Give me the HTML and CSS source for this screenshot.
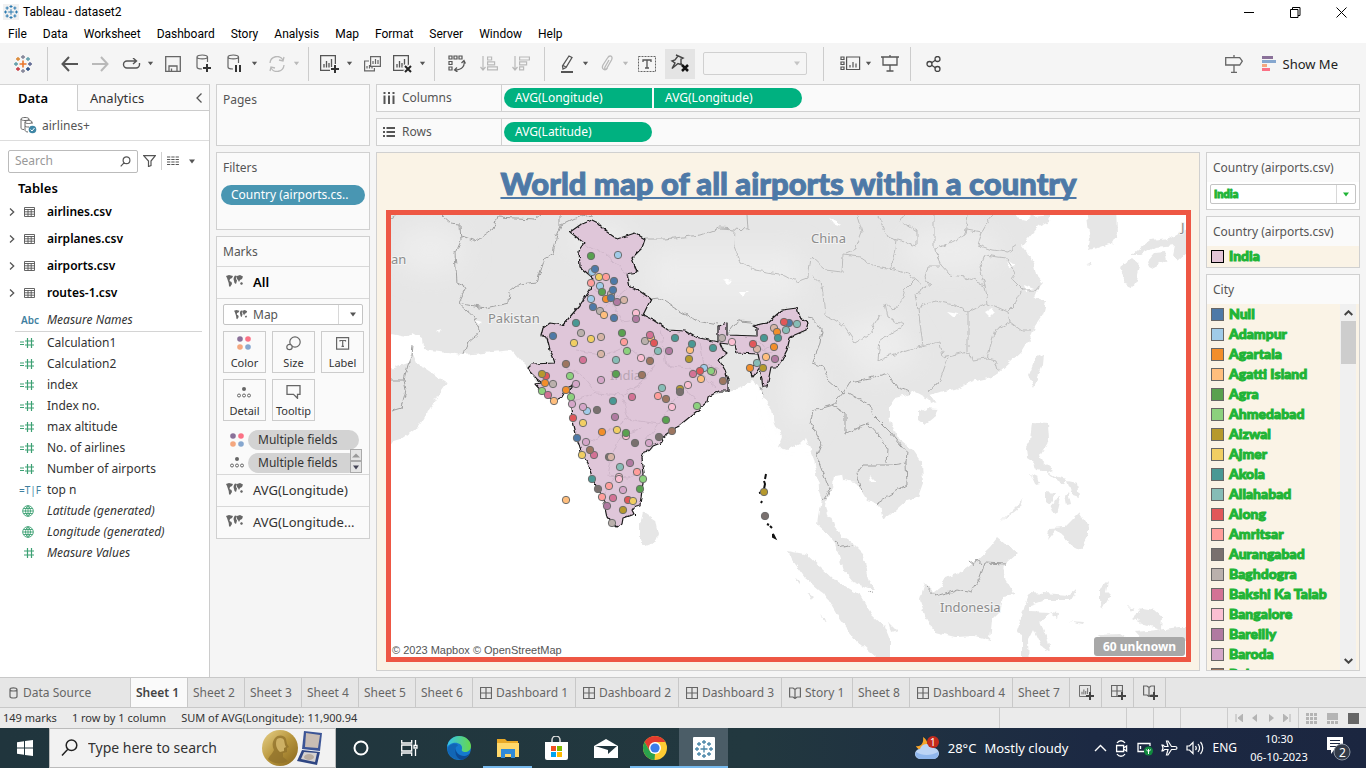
FILE: index.html
```html
<!DOCTYPE html>
<html lang="en">
<head>
<meta charset="utf-8">
<title>Tableau - dataset2</title>
<link rel="stylesheet" href="styles.css">
</head>
<body>
<svg class="defs" aria-hidden="true">
  <symbol id="plusmark" viewBox="0 0 18 18"><path d="M9 5.500v7M5.500 9h7M9 0v4M7 2h4M9 14v4M7 16h4M0 9h4M2 7v4M14 9h4M16 7v4M4 2v4M2 4h4M14 2v4M12 4h4M4 12v4M2 14h4M14 12v4M12 14h4" fill="none" stroke="currentColor" stroke-width="1.300"/></symbol>
  <symbol id="caret" viewBox="0 0 8 5"><path d="M1 .5h6L4 4.500z" fill="currentColor"/></symbol>
  <symbol id="world" viewBox="0 0 18 13"><path d="M0 1l3-1 4 1-1 2-2 1-.5 2 2 1 .5 2-2 3-1-1-.3-3L2 6 1 3zM8 2l1-1.500 2 .5-1 3 1 1.500-1 3.500-1.500-1L8 6l-.5-2zM11 1l3-1 3 1.500-1 2.500-2 1-1 2-1-2-1-1zM14 8l2-1 1 2-2 1z" fill="currentColor"/></symbol>
  <symbol id="table" viewBox="0 0 11 10"><path d="M.5.5h10v9H.5zM.5 2.500h10M.5 4.800h10M.5 7.200h10M4 2.500v7M7.200 2.500v7" fill="none" stroke="currentColor" stroke-width=".9"/></symbol>
  <symbol id="hash" viewBox="0 0 16 11"><path d="M8.500 1v10M12.500 1v10M5 4h10M5 8h10" fill="none" stroke="currentColor" stroke-width="1.200"/></symbol>
  <symbol id="eqhash" viewBox="0 0 16 11"><path d="M8.500 1v10M12.500 1v10M6 4h9M6 8h9M1 5h4M1 7.500h4" fill="none" stroke="currentColor" stroke-width="1.200"/></symbol>
  <symbol id="globe" viewBox="0 0 12 12"><path d="M6 .7a5.300 5.300 0 100 10.600A5.300 5.300 0 006 .7zM6 .7v10.600M.7 6h10.600M1.500 3.500h9M1.500 8.500h9M6 .7C2.700 3.500 2.700 8.500 6 11.300 9.300 8.500 9.300 3.500 6 .7" fill="none" stroke="currentColor" stroke-width=".9"/></symbol>
  <symbol id="colors" viewBox="0 0 14 14"><circle cx="3" cy="3" r="2.800" fill="#8a7199"/><circle cx="11" cy="3" r="2.800" fill="#fb7185"/><circle cx="3" cy="11" r="2.800" fill="#f4a77f"/><circle cx="11" cy="11" r="2.800" fill="#86a7cf"/></symbol>
  <symbol id="detail" viewBox="0 0 14 11"><circle cx="7" cy="2" r="2" fill="#666"/><g fill="none" stroke="#666"><circle cx="2" cy="8.500" r="1.500"/><circle cx="7" cy="8.500" r="1.500"/><circle cx="12" cy="8.500" r="1.500"/></g></symbol>
  <symbol id="dash" viewBox="0 0 12 12"><path d="M.5.5h11v11H.5zM6 .5v11M.5 6h11" fill="none" stroke="currentColor" stroke-width="1.200"/></symbol>
  <symbol id="book" viewBox="0 0 12 12"><path d="M6 2.500L4 1H.6v9H4l2 1.500L8 10h3.400V1H8zM6 2.500v9" fill="none" stroke="currentColor" stroke-width="1.200"/></symbol>
  <symbol id="chart" viewBox="0 0 16 16"><path d="M.6.6h14.800v14.800H.6zM4 12.500V9M6.500 12.500V6M9 12.500V8M11.500 12.500V4" fill="none" stroke="currentColor" stroke-width="1.300"/></symbol>
</svg>
<div class="app">
  <header class="titlebar">
    <svg class="applogo" width="16" height="16"><rect width="16" height="16" fill="#f1f1f1"/><use href="#plusmark" x="1" y="1" width="14" height="14"/></svg>
    <span class="apptitle">Tableau - dataset2</span>
    <button class="win" aria-label="Minimize"><svg width="11" height="11"><path d="M0 5.500h10" stroke="#000"/></svg></button>
    <button class="win" aria-label="Restore"><svg width="11" height="11"><path d="M.5 2.500h7.500v8H.5zM2.500 2.500v-2h7.500v8H8" fill="none" stroke="#000"/></svg></button>
    <button class="win" aria-label="Close"><svg width="11" height="11"><path d="M.5.5l10 10M10.500.5l-10 10" stroke="#000"/></svg></button>
  </header>
  <nav class="menubar">
    <button>File</button><button>Data</button><button>Worksheet</button><button>Dashboard</button><button>Story</button><button>Analysis</button><button>Map</button><button>Format</button><button>Server</button><button>Window</button><button>Help</button>
  </nav>

  <div class="toolbar">
    <div class="group first">
      <button class="tb" aria-label="Start page"><svg width="18" height="18" viewBox="0 0 18 18" fill="none" stroke-width="1.300"><path d="M9 5.500v7M5.500 9h7" stroke="#e8762c" stroke-width="1.600"/><path d="M9 0v4M7 2h4M9 14v4M7 16h4" stroke="#7d7f93"/><path d="M0 9h4M2 7v4" stroke="#5b9aa6"/><path d="M14 9h4M16 7v4" stroke="#59638f"/><path d="M4 2v4M2 4h4" stroke="#d9842f"/><path d="M14 2v4M12 4h4" stroke="#5c9daa"/><path d="M4 12v4M2 14h4" stroke="#c4353d"/><path d="M14 12v4M12 14h4" stroke="#1f447e"/></svg></button>
    </div>
    <div class="group roomy">
      <button class="tb" aria-label="Back"><svg width="17" height="16"><path d="M8 1L1.500 8 8 15M2 8h15" fill="none" stroke="#555" stroke-width="2"/></svg></button>
      <button class="tb off" aria-label="Forward"><svg width="17" height="16"><path d="M9 1l6.500 7L9 15M15 8H0" fill="none" stroke="currentColor" stroke-width="2"/></svg></button>
      <button class="tb" aria-label="Replay"><svg width="19" height="12"><path d="M14 3H5a3.500 3.500 0 000 7h9a3.500 3.500 0 003.500-3.500V5M11 0l3.500 3L11 6" fill="none" stroke="#555" stroke-width="1.400"/></svg></button>
      <button class="car" aria-label="Replay options"><svg width="7" height="5"><use href="#caret"/></svg></button>
      <button class="tb" aria-label="Save"><svg width="16" height="16"><path d="M.7.7h14.600v14.600H.7zM4 15v-5h8v5M6.500 15v-2.500" fill="none" stroke="#666" stroke-width="1.300"/></svg></button>
      <button class="tb" aria-label="New data source"><svg width="16" height="19"><path d="M11.500 8V3C11.500.3 1 .3 1 3v10c0 1.500 2 2 5 2M1 3c0 2.500 10.500 2.500 10.500 0" fill="none" stroke="#666" stroke-width="1.200"/><path d="M11 10v8M7 14h8" stroke="#333" stroke-width="2"/></svg></button>
      <button class="tb" aria-label="Pause updates"><svg width="16" height="19"><path d="M11.500 9V3C11.500.3 1 .3 1 3v10c0 1.500 2 2 5 2M1 3c0 2.500 10.500 2.500 10.500 0" fill="none" stroke="#666" stroke-width="1.200"/><path d="M9 11v7M13 11v7" stroke="#333" stroke-width="2"/></svg></button>
      <button class="car" aria-label="Pause options"><svg width="7" height="5"><use href="#caret"/></svg></button>
      <button class="tb off" aria-label="Refresh"><svg width="18" height="16"><path d="M2 7a7 7 0 0113-3M16 9a7 7 0 01-13 3M16 1l-1 4-4-1M2 15l1-4 4 1" fill="none" stroke="currentColor" stroke-width="1.300"/></svg></button>
      <button class="car off" aria-label="Refresh options"><svg width="7" height="5"><use href="#caret"/></svg></button>
    </div>
    <div class="group roomy">
      <button class="tb" aria-label="New worksheet"><svg width="20" height="18"><use href="#chart" width="16" height="16"/><path d="M15 9v9M10 14h9" stroke="#f5f5f5" stroke-width="4"/><path d="M15 10v8M11 14h8" stroke="#333" stroke-width="2"/></svg></button>
      <button class="car" aria-label="New options"><svg width="7" height="5"><use href="#caret"/></svg></button>
      <button class="tb" aria-label="Duplicate"><svg width="17" height="16" fill="none" stroke="#666" stroke-width="1.200"><path d="M6.600.6h9.800v9.800H6.600zM9 8V5M11.500 8V3M14 8V4M5 5H.6v9.800h9.800V12M3 12.500V10M5.500 12.500V9M8 12.500V11"/></svg></button>
      <button class="tb" aria-label="Clear sheet"><svg width="20" height="18"><use href="#chart" width="16" height="16"/><path d="M11 10l7 8M18 10l-7 8" stroke="#f5f5f5" stroke-width="4"/><path d="M12 11l6 6M18 11l-6 6" stroke="#222" stroke-width="2"/></svg></button>
      <button class="car" aria-label="Clear options"><svg width="7" height="5"><use href="#caret"/></svg></button>
    </div>
    <div class="group wide">
      <button class="tb" aria-label="Swap rows and columns"><svg width="18" height="17" fill="none" stroke="#555" stroke-width="1.200"><path d="M1 1h3v3H1zM6 1h3v3H6zM11 1h3v3h-3zM1 6.500h3v3H1zM1 12h3v3H1zM16 6c1 5-2 9-9 9M13.500 8L16 5.500 17.500 8.500M9 12.500L6.500 15l3 2"/></svg></button>
      <button class="tb off" aria-label="Sort ascending"><svg width="18" height="15" fill="none" stroke="currentColor" stroke-width="1.200"><path d="M3 0v14M.5 11L3 14l2.500-3M7.600 1h4v3h-4zM7.600 5.800h7v3h-7zM7.600 10.800h9.800v3H7.600z"/></svg></button>
      <button class="tb off" aria-label="Sort descending"><svg width="18" height="15" fill="none" stroke="currentColor" stroke-width="1.200"><path d="M3 0v14M.5 11L3 14l2.500-3M7.600 1h9.800v3H7.600zM7.600 5.800h7v3h-7zM7.600 10.800h4v3h-4z"/></svg></button>
    </div>
    <div class="group">
      <button class="tb" aria-label="Highlight"><svg width="14" height="18" fill="none" stroke="#555" stroke-width="1.300"><path d="M9 1l3 1.500-6 10L3 14l-.5-3zM3 10.500L6 12"/><path d="M1 17h12" stroke-width="2"/></svg></button>
      <button class="car" aria-label="Highlight options"><svg width="7" height="5"><use href="#caret"/></svg></button>
      <button class="tb off" aria-label="Group"><svg width="14" height="17" fill="none" stroke="currentColor" stroke-width="1.300"><path d="M9 5l-4 7c-1 2 1 3 2 1l4.500-8c2-4-2-5.500-4-2L3 10c-2 4 2 6.500 4.500 3"/></svg></button>
      <button class="car off" aria-label="Group options"><svg width="7" height="5"><use href="#caret"/></svg></button>
      <button class="tb" aria-label="Show mark labels"><svg width="18" height="16" fill="none" stroke="#666"><path d="M.5.5h17v15H.5z" stroke-dasharray="2 1"/><path d="M5 6V4h8v2M9 4v8M7 12h4" stroke="#555" stroke-width="1.300"/></svg></button>
      <button class="tb pin" aria-label="Fix axes"><svg width="20" height="19"><path d="M6 1l7 3-2 1v4l1 2-4-1.500-6 5 3-5.500-3-2 3-1 3-4z" fill="none" stroke="#444" stroke-width="1.400"/><path d="M12 11l6 6M18 11l-6 6" stroke="#111" stroke-width="2.500"/></svg></button>
      <label class="combo fit"><select disabled aria-label="Fit"><option></option></select><svg width="8" height="5"><use href="#caret"/></svg></label>
    </div>
    <div class="group cards-group">
      <button class="tb" aria-label="Show cards"><svg width="21" height="15" fill="none" stroke="#555" stroke-width="1.200"><path d="M1 1h3v2.500H1zM1 6h3v2.500H1zM1 11h3v2.500H1zM6.600 1h13v12.500h-13zM10 11.500V9M13 11.500V6M16 11.500V7.500"/></svg></button>
      <button class="car" aria-label="Card options"><svg width="7" height="5"><use href="#caret"/></svg></button>
      <button class="tb" aria-label="Presentation mode"><svg width="18" height="17" fill="none" stroke="#555" stroke-width="1.300"><path d="M0 2h18M9 0v2M2 2v8h14V2M9 10v6M5.500 16h7"/></svg></button>
    </div>
    <div class="group last">
      <button class="tb" aria-label="Share"><svg width="15" height="16" fill="none" stroke="#444" stroke-width="1.300"><circle cx="3.500" cy="8" r="2.500"/><circle cx="11.500" cy="3" r="2.500"/><circle cx="11.500" cy="13" r="2.500"/><path d="M5.600 6.700l3.800-2.400M5.600 9.300l3.800 2.400"/></svg></button>
    </div>
    <button class="tb guide" aria-label="Data guide"><svg width="18" height="18" fill="none" stroke="#666" stroke-width="1.300"><path d="M9 0v2.500M9 10v7.500M6 17.400h6M.7 2.700h14l2.600 3.500L14.700 10H.7z"/></svg></button>
    <button class="showme"><svg width="14" height="15"><path d="M0 0h11v3H0z" fill="#8a7199"/><path d="M0 4h14v3H0z" fill="#86a7cf"/><path d="M0 8h5v3H0z" fill="#f4a77f"/><path d="M0 12h8v3H0z" fill="#fb7185"/></svg>Show Me</button>
  </div>

  <main class="work">
    <aside class="datapane">
      <div class="ptabs"><button class="on">Data</button><button>Analytics<svg width="6" height="10"><path d="M5.500.5L1 5l4.500 4.500" fill="none" stroke="#555" stroke-width="1.300"/></svg></button></div>
      <div class="source"><svg width="17" height="17" fill="none" stroke="#666"><path d="M9 3.500V2C9 0 1 0 1 2v9c0 1 1 1.500 3 1.500M1 2c0 2 8 2 8 0M12 7V5c0-2-7-2-7 0v8c0 1 1 2 3 2M5 5c0 2 7 2 7 0M5 9c1 1 2 1 4 1"/><circle cx="12.500" cy="12.500" r="3.800" fill="#3f87a6" stroke="none"/><path d="M10.500 12.500l1.500 1.500 2.500-3" stroke="#fff"/></svg>airlines+</div>
      <div class="finder">
        <label class="search"><input type="text" placeholder="Search" aria-label="Search fields"><svg width="11" height="11"><path d="M6.500.8a3.400 3.400 0 110 6.800 3.400 3.400 0 010-6.800M4.200 6.700L.7 10.300" fill="none" stroke="#555" stroke-width="1.200"/></svg></label>
        <button aria-label="Filter fields"><svg width="13" height="12"><path d="M.7.7h11.600L8 6v4.500L5.500 11.500V6z" fill="none" stroke="#555" stroke-width="1.200"/></svg></button>
        <i class="vline"></i>
        <button class="viewby" aria-label="View options"><svg width="12" height="10"><path d="M0 1h12M0 3.500h12M0 6h12M0 8.500h12" stroke="#555" stroke-dasharray="3.300 1" stroke-width="1.100"/></svg><svg width="8" height="5"><use href="#caret"/></svg></button>
      </div>
      <h2>Tables</h2>
      <ul class="tables">
        <li><svg width="6" height="8"><path d="M1 .5L4.700 4 1 7.500" fill="none" stroke="#555" stroke-width="1.300"/></svg><svg width="11" height="10"><use href="#table"/></svg>airlines.csv</li>
        <li><svg width="6" height="8"><path d="M1 .5L4.700 4 1 7.500" fill="none" stroke="#555" stroke-width="1.300"/></svg><svg width="11" height="10"><use href="#table"/></svg>airplanes.csv</li>
        <li><svg width="6" height="8"><path d="M1 .5L4.700 4 1 7.500" fill="none" stroke="#555" stroke-width="1.300"/></svg><svg width="11" height="10"><use href="#table"/></svg>airports.csv</li>
        <li><svg width="6" height="8"><path d="M1 .5L4.700 4 1 7.500" fill="none" stroke="#555" stroke-width="1.300"/></svg><svg width="11" height="10"><use href="#table"/></svg>routes-1.csv</li>
      </ul>
      <div class="names"><span class="type">Abc</span><em>Measure Names</em></div>
      <ul class="fields">
        <li><svg width="16" height="11"><use href="#eqhash"/></svg>Calculation1</li>
        <li><svg width="16" height="11"><use href="#eqhash"/></svg>Calculation2</li>
        <li><svg width="16" height="11"><use href="#eqhash"/></svg>index</li>
        <li><svg width="16" height="11"><use href="#eqhash"/></svg>Index no.</li>
        <li><svg width="16" height="11"><use href="#eqhash"/></svg>max altitude</li>
        <li><svg width="16" height="11"><use href="#eqhash"/></svg>No. of airlines</li>
        <li><svg width="16" height="11"><use href="#eqhash"/></svg>Number of airports</li>
        <li><span class="type">=T|F</span>top n</li>
        <li><svg width="16" height="12"><use href="#globe" x="3" width="12" height="12"/></svg><em>Latitude (generated)</em></li>
        <li><svg width="16" height="12"><use href="#globe" x="3" width="12" height="12"/></svg><em>Longitude (generated)</em></li>
        <li><svg width="16" height="11"><use href="#hash"/></svg><em>Measure Values</em></li>
      </ul>
    </aside>

    <div class="cards">
      <section class="card pages"><h3>Pages</h3></section>
      <section class="card filters"><h3>Filters</h3><button class="pill blue">Country (airports.cs..</button></section>
      <section class="card marks">
        <h3>Marks</h3>
        <button class="layer all"><svg width="18" height="13"><use href="#world"/></svg>All</button>
        <div class="markbox">
          <label class="combo type-combo"><svg class="lead" width="14" height="10"><use href="#world"/></svg><select aria-label="Mark type"><option>Map</option></select><svg width="8" height="5"><use href="#caret"/></svg></label>
          <div class="props">
            <button><svg width="15" height="15"><use href="#colors" width="14" height="14"/></svg>Color</button>
            <button><svg width="15" height="15" fill="none" stroke="#666" stroke-width="1.200"><circle cx="9" cy="6" r="5.200"/><circle cx="3.500" cy="11" r="2.700" fill="#fafafa"/></svg>Size</button>
            <button><svg width="15" height="15" fill="none" stroke="#666" stroke-width="1.200"><path d="M1.600 1.600h12v11.500h-12zM5 5.500V4.500h5.500v1M7.700 4.500v6M6.500 10.300h2.500"/></svg>Label</button>
            <button><svg width="15" height="15"><use href="#detail" y="3" width="14" height="11"/></svg>Detail</button>
            <button><svg width="15" height="15" fill="none" stroke="#666" stroke-width="1.300"><path d="M1 1.700h13v8.600h-2.500v4L7.500 10.300H1z"/></svg>Tooltip</button>
          </div>
          <div class="encs">
            <div class="enc"><svg width="14" height="14"><use href="#colors"/></svg><button class="pill gray">Multiple fields</button></div>
            <div class="enc"><svg width="14" height="11"><use href="#detail"/></svg><button class="pill gray">Multiple fields</button></div>
            <div class="spin"><button aria-label="Scroll up"><svg width="8" height="5" viewBox="0 0 8 5"><path d="M0 4.500L4 .5l4 4z" fill="#999"/></svg></button><button aria-label="Scroll down"><svg width="8" height="5"><use href="#caret"/></svg></button></div>
          </div>
        </div>
        <button class="layer"><svg width="18" height="13"><use href="#world"/></svg>AVG(Longitude)</button>
        <button class="layer"><svg width="18" height="13"><use href="#world"/></svg>AVG(Longitude...</button>
      </section>
    </div>

    <div class="sheetarea">
      <div class="card shelf"><span class="shelfname"><svg width="12" height="12"><path d="M1.500 0v2M6 0v2M10.500 0v2M1.500 3.500V12M6 3.500V12M10.500 3.500V12" stroke="#555" stroke-width="2"/></svg>Columns</span><button class="pill green left">AVG(Longitude)</button><button class="pill green right">AVG(Longitude)</button></div>
      <div class="card shelf"><span class="shelfname"><svg width="12" height="12"><path d="M0 2h2M0 6h2M0 10h2M3.500 2H12M3.500 6H12M3.500 10H12" stroke="#555" stroke-width="2"/></svg>Rows</span><button class="pill green">AVG(Latitude)</button></div>
      <div class="viewrow">
        <section class="card canvas">
          <h1>World map of all airports within a country</h1>
          <div class="mapframe">
            <svg class="map" viewBox="391 215 795 442" preserveAspectRatio="xMidYMid slice" role="img" aria-label="Map of India with airports">
              <defs>
                <filter id="rough" x="-5%" y="-5%" width="110%" height="110%"><feTurbulence type="fractalNoise" baseFrequency=".14" numOctaves="2" seed="4"/><feDisplacementMap in="SourceGraphic" scale="6" xChannelSelector="R" yChannelSelector="G"/></filter>
                <filter id="soft" x="-20%" y="-20%" width="140%" height="140%"><feGaussianBlur stdDeviation="12"/></filter>
                <filter id="rim" x="-5%" y="-5%" width="110%" height="110%"><feTurbulence type="fractalNoise" baseFrequency=".22" numOctaves="1" seed="8"/><feDisplacementMap in="SourceGraphic" scale="4" xChannelSelector="R" yChannelSelector="G"/></filter>
              </defs>
              <rect x="391" y="215" width="795" height="442" fill="#fff"/>
              <g class="land" filter="url(#rough)">
                <path d="M381 205H1012L1017 218 1026 220 1033 216 1051 214 1049 221 1038 226 1022 245 1028 253 1034 265 1036 275 1043 283 1037 290 1034 297 1046 302 1043 315 1035 327 1032 335 1023 350 1010 362 998 373 993 377 975 381 955 389 940 392 930 395 935 403 930 405 928 398 915 391 903 396 895 398 889 407 889 417 897 437 913 450 922 463 923 483 918 497 907 500 898 508 890 515 882 520 880 510 877 503 867 500 862 492 855 482 843 480 842 474 834 475 833 485 827 497 825 507 827 515 832 517 835 527 842 537 852 543 862 553 867 570 870 582 875 588 867 588 853 582 843 570 838 553 835 543 827 533 818 525 820 510 822 500 818 490 817 473 813 457 805 438 800 443 787 450 778 447 782 437 775 423 772 410 763 397 758 385 752 380 740 388 728 391 708 397 697 411 680 425 662 439 649 451 644 452 642 458 644 473 643 483 640 505 623 518 617 527 612 523 598 490 588 463 577 438 570 400 567 388 554 401 543 393 530 372 528 368 523 363 512 350 493 352 463 355 423 350 422 338 413 333 407 337 391 334H381z"/>
                <path d="M381 372L408 363 412 352 417 363 432 373 447 383 437 397 427 413 418 427 400 440 381 446z"/>
                <path d="M1087 215L1090 240 1088 250 1098 248 1112 243 1117 235 1116 205H1087zM1132 255L1150 240 1170 238 1180 232 1190 228V250L1177 262 1173 255 1175 245 1155 247 1140 255zM1147 262L1155 253 1165 252 1167 260 1150 269zM1120 267L1132 258 1140 265 1137 280 1132 288 1124 285 1125 275zM1086 264l6-2-2 3zM1044 354L1043 365 1034 387 1028 375 1035 358zM918 413L928 408 939 409 935 417 925 425 918 420z"/>
                <path d="M1032 423L1048 424 1049 440 1040 455 1043 462 1053 470 1048 472 1037 470 1033 462 1027 458 1026 447 1030 440zM1031 474l7 3 2 7-4 1zM1045 470l10 6 12 3-2 6-8-5zM1068 481l9 2 2 14-6-2zM1046 492l9 1-5 11-4-3zM1055 500l5-2-4 16-6-4zM1065 495l3-4 3 13-4 1zM1047 540L1050 528 1065 527 1072 520 1080 512 1088 525 1088 535 1080 550 1070 545 1063 535 1055 530zM1000 522L1020 502 1023 497 1022 505z"/>
                <path d="M925 583L935 592 942 587 945 578 960 573 975 562 990 548 998 538 1010 548 1018 553 1007 563 1002 568 1005 578 1015 595 1003 597 1000 612 992 620 990 640 975 636 955 637 935 632 925 615 920 600zM788 551L808 555 835 580 860 595 872 615 885 627 890 640 890 667 875 657 855 640 840 620 825 595 805 578 792 560z"/>
                <path d="M1026 602L1030 592 1045 593 1068 595 1076 590 1070 600 1045 600 1030 605 1030 612 1050 613 1040 622 1048 640 1050 652 1040 645 1033 630 1028 640 1029 667H1022L1022 635 1016 632 1022 615zM1100 590L1108 582 1106 592 1110 596 1102 610 1100 600zM1128 606l7 3-4 2zM1132 618L1142 608 1155 610 1162 616 1161 630 1145 625zM1135 632l22-2 22-3 9 0v14l-45 0zM1098 635l22-1 8 5-25 3zM1069 621l16 1-1 2zM1050 612l8 1-1 4zM888 622l9 9-6 2zM794 578l6 3-2 2zM808 592l6 5-2 2zM820 614l6 6-2 1zM643 512L655 520 658 535 655 543 645 547 640 540 640 525z"/>
              </g>
              <g class="shade" filter="url(#soft)"><path d="M650 250h150v50H650zM830 330l60-20 30 50-50 20zM560 240l60-20 10 50z"/><ellipse cx="430" cy="250" rx="35" ry="25"/><ellipse cx="800" cy="390" rx="15" ry="40"/><ellipse cx="950" cy="250" rx="50" ry="22"/></g>
              <g class="lakes" filter="url(#rim)"><path d="M829 218l8 3 4 5-8-3zM723 279l9 2-4 3zM739 292l9 0-6 4zM1007 260l9 6-7 2zM1024 285l10 4-8 2zM985 312l7-4 3 4-5 5zM947 312l12 2-6 3zM869 475l7 7-5 0zM475 320l7 2-4 3zM436 331l5-2-2 4z"/></g>
              <g class="state" filter="url(#rough)">
                <path d="M735 231L734 246 740 262 755 270 785 275 797 282 808 278 811 257 825 270 842 272 843 255 860 257 874 267 895 270 910 275 922 285M811 275L822 285 825 315 830 317 843 325 855 343 870 333 880 315M857 215L862 232 855 250 846 254M878 215L888 237 898 240 917 246M897 240L895 255 889 270M900 222l4-7M917 246v-15l-14-9M915 280L905 290 903 298 893 310 885 303 888 318 905 325"/>
                <path d="M934 215V250L941 265 950 275 965 277 985 285 988 303M934 250L955 240 965 235 968 215M966 229L982 232 978 245 992 250 1008 252 1018 245M982 232l10-17M985 285L980 268 985 255 1005 258 1015 273 1012 280 1022 290 1035 290 1041 283M1022 290L1015 305 1008 312 988 303 968 312 955 305 935 301 918 308 915 295 930 285 925 278 928 266 940 266M968 312V350M1008 312L1010 322 1022 331 1030 331M1010 322L995 330 987 358 995 360 998 371M878 360L900 353 925 345 940 342 943 357 968 351 972 360 987 358M948 358L940 380 928 392M918 308l5 37M878 360l2-20 25-15"/>
              </g>
              <g class="border" filter="url(#rough)">
                <path d="M442 215L452 224 460 225 461 240 455 253 457 283 466 287 458 303 475 318 480 332 467 343 464 355M458 303L485 308 509 303 510 292 520 284 537 282 545 258 553 253 557 235 561 225 575 218 592 215M461 237L475 242 493 229 497 217 535 219 540 215M560 213V225M391 218l8-4M413 345L412 356 408 365 404 380H391M404 380L406 390 401 408 391 411"/>
                <path class="thin" d="M645 239L665 239 700 235 720 228 748 230 747 215"/>
                <path d="M651 299L660 298 680 311 697 321 718 325M727 335L738 321 751 322 757 327M808 318L815 320 822 330 820 343 812 363 823 367 828 380 843 393 850 382 870 378 887 373 897 387 910 392M760 387l3 8M843 393L833 405 813 411 810 423 822 445 817 457 830 490 822 502M833 405L845 413V433L868 424 880 437 888 450 887 463M848 393l22 12 3 10 17 17 17 20-1 11 1 22-17 10-13 8M862 492L857 473 863 465 892 465 906 463M835 541l9 7 9-2M926 586L935 596 950 592 958 589 972 592 980 577 985 563 1006 564M969 561l5 4 3-6 4 5M868 592l6-1"/>
              </g>
              <path class="india" filter="url(#rim)" d="M728 391L719 391 708 397 707 402 697 411 680 425 662 438 663 442 653 446 649 451 644 452 642 458 644 473 643 483 640 505 635 506 632 510 634 514 623 518 622 524 617 527 612 523 607 517 603 497 598 490 592 477 588 463 582 455 577 438 572 417 570 400 570 390 573 385 567 388 562 397 554 401 543 393 535 384 542 383 537 379 530 372 528 368 532 364 555 363 550 350 547 337 541 336 543 328 550 323 563 325 580 305 590 290 593 278 580 267 579 250 584 243 570 232 580 225 592 220 598 223 607 232 617 239 635 233 645 239 642 248 632 258 637 272 627 274 630 287 638 290 651 299 643 315 653 320 668 330 685 331 695 337 718 342 718 326 727 323 727 335 757 336 757 328 753 326 767 323 782 310 797 308 800 317 808 323 806 330 790 337 787 350 782 360 777 367 771 367 767 387 763 387 760 367 753 377 750 367 760 363 758 354 737 353 735 345 720 343 723 350 727 353 719 360 725 370 728 380z"/>
              <g class="isles"><path d="M766 474l-1 5M764 481l1 3-1 5M763 492l-4 1M762 501l-1 2M767 524l2 1M770 526l2 2M773 534l2 4-2-1z"/><path d="M635 515h1"/></g>
              <g class="inner" filter="url(#rough)"><path d="M585 244l20 10 25 22M593 290l20 10 15-12M600 310l12-8 10 20 16-2M576 350l30 5 20-10 18 15 22-12M560 365l20 8 16 20 26 2 20-12 14-20M596 393l-22 8M622 395l6 24-16 10-24 14M628 419l30 5 20-28M612 456l8-20 22-8M612 456l-4 20 20 2 14-6M603 495l12-18M660 330l6 35 28 4 22 18M700 342l4 22 16 6M657 425l-12 15M680 386l16 12M757 340l8 10 16-12 14-18M760 350l12 2"/></g>
              <g class="labels"><text x="391" y="264">an</text><text x="811" y="243">China</text><text x="488" y="323">Pakistan</text><text x="940" y="612">Indonesia</text><text x="1181" y="232">J</text><text class="faint" x="610" y="380">India</text></g>
              <g id="airports" class="airports"></g>
            </svg>
            <span class="credit">© 2023 Mapbox © OpenStreetMap</span>
            <button class="unknown">60 unknown</button>
          </div>
        </section>
        <div class="legends">
          <section class="card countryfilter"><h3>Country (airports.csv)</h3><label class="combo country"><select aria-label="Country"><option>India</option></select><svg width="8" height="5"><use href="#caret"/></svg></label></section>
          <section class="card countrylegend"><h3>Country (airports.csv)</h3><ul class="keys"><li class="nation"><i style="background:#e3c4d6"></i>India</li></ul></section>
          <section class="card citylegend"><h3>City</h3>
            <div class="citybox">
              <ul class="keys" id="cities"></ul>
              <div class="scroll"><svg width="9" height="6"><path d="M.7 5L4.500 1.300 8.300 5" fill="none" stroke="#444" stroke-width="2"/></svg><i></i><svg width="9" height="6"><path d="M.7 1l3.800 3.700L8.300 1" fill="none" stroke="#444" stroke-width="2"/></svg></div>
            </div>
          </section>
        </div>
      </div>
    </div>
  </main>

  <nav class="sheets">
    <button class="ds"><svg width="9" height="12"><path d="M1 2.500v7c0 2 7 2 7 0v-7C8 .2 1 .2 1 2.500c0 2 7 2 7 0" fill="none" stroke="currentColor" stroke-width="1.200"/></svg>Data Source</button>
    <button class="on">Sheet 1</button><button>Sheet 2</button><button>Sheet 3</button><button>Sheet 4</button><button>Sheet 5</button><button>Sheet 6</button>
    <button class="db"><svg width="12" height="12"><use href="#dash"/></svg>Dashboard 1</button>
    <button class="db"><svg width="12" height="12"><use href="#dash"/></svg>Dashboard 2</button>
    <button class="db"><svg width="12" height="12"><use href="#dash"/></svg>Dashboard 3</button>
    <button class="story"><svg width="12" height="12"><use href="#book"/></svg>Story 1</button>
    <button>Sheet 8</button>
    <button class="db"><svg width="12" height="12"><use href="#dash"/></svg>Dashboard 4</button>
    <button>Sheet 7</button>
    <button class="add" aria-label="New Worksheet"><svg width="15" height="15"><use href="#chart" width="12" height="12"/><path d="M11 7v8M7 11h8" stroke="#e6e6e6" stroke-width="4"/><path d="M11 7v8M7 11h8" stroke="#444" stroke-width="2"/></svg></button>
    <button class="add" aria-label="New Dashboard"><svg width="15" height="15"><use href="#dash" width="12" height="12"/><path d="M11 7v8M7 11h8" stroke="#444" stroke-width="2"/></svg></button>
    <button class="add" aria-label="New Story"><svg width="15" height="15"><use href="#book" width="12" height="12"/><path d="M11 7v8M7 11h8" stroke="#444" stroke-width="2"/></svg></button>
  </nav>

  <div class="status">
    <span>149 marks</span><span>1 row by 1 column</span><span>SUM of AVG(Longitude): 11,900.94</span>
    <i class="cell long"></i><i class="cell"></i><i class="cell"></i><i class="cell big"></i>
    <div class="pager"><svg width="8" height="8"><path d="M1 0v8M8 0v8L3 4z" fill="#b4b4b4" stroke="#b4b4b4"/></svg><svg width="8" height="8"><path d="M6 0v8L1 4z" fill="#b4b4b4"/></svg><svg width="8" height="8"><path d="M2 0v8l5-4z" fill="#b4b4b4"/></svg><svg width="8" height="8"><path d="M7 0v8M0 0v8l5-4z" fill="#b4b4b4" stroke="#b4b4b4"/></svg></div>
    <div class="views"><svg width="11" height="11"><path d="M0 1.500h11M0 5.500h11M0 9.500h11" stroke="#b4b4b4" stroke-width="3" stroke-dasharray="3 1"/></svg><svg width="11" height="11"><path d="M0 0h11v7H0z" fill="#b4b4b4"/><path d="M0 9.500h11" stroke="#b4b4b4" stroke-width="3" stroke-dasharray="3 1"/></svg><svg width="11" height="11"><path d="M0 0h11v11H0z" fill="#666"/></svg></div>
  </div>

  <footer class="taskbar">
    <button class="task" aria-label="Start"><svg width="16" height="16"><path d="M0 2.300l7-1v6.200H0zM8 1.100L16 0v7.500H8zM0 8.500h7v6.200l-7-1zM8 8.500h8V16l-8-1.100z" fill="#fff"/></svg></button>
    <label class="tasksearch"><svg width="17" height="18"><path d="M10.500 1a5.300 5.300 0 110 10.600 5.300 5.300 0 010-10.600M6.800 10.200L1 16.500" fill="none" stroke="#222" stroke-width="1.500"/></svg><input type="text" placeholder="Type here to search" aria-label="Type here to search">
      <svg class="medal" width="66" height="38" viewBox="0 0 66 38"><defs><linearGradient id="gold" x2="1" y2="1"><stop stop-color="#e8d28a"/><stop offset=".5" stop-color="#b8963d"/><stop offset="1" stop-color="#87661d"/></linearGradient></defs><circle cx="19" cy="19" r="18" fill="url(#gold)"/><path d="M14 9c3-4 10-3 11 1l1 5 2 3-2 1v4l-4 1v4l5 4c-7 4-15 3-20-2 2-4 5-6 6-9-2-4-2-8 1-12z" fill="#8f702b" opacity=".75"/><path d="M16 10c3-2 6-1 7 1l1 5 1 2-2 1v3l-4 1c-4-3-5-9-3-13z" fill="#cdb064"/><path d="M43 2l18 2-2 18-18-2z" fill="#3c5596"/><path d="M45 4l14 2-2 13-13-1z" fill="#c9bdb4"/><path d="M41 21l18 2-3 13-20-4z" fill="#2f4683"/><path d="M43 23l13 1-2 9-14-3z" fill="#d6d2d0"/><ellipse cx="48" cy="28" rx="5" ry="3" fill="#b8aca0"/></svg>
    </label>
    <button class="task" aria-label="Cortana"><svg width="18" height="18"><circle cx="9" cy="9" r="6.500" fill="none" stroke="#fff" stroke-width="2"/></svg></button>
    <button class="task" aria-label="Task view"><svg width="17" height="16" fill="none" stroke="#fff" stroke-width="1.300"><path d="M.7 5h10v6H.7zM.7 0v3h10V0M.7 16v-3h10v3M14.500 0v5M14.500 9v7M13 5.500h3v2.500h-3z"/></svg></button>
    <button class="task" aria-label="Edge"><svg width="24" height="24" viewBox="0 0 24 24"><defs><linearGradient id="edge" x2="1"><stop stop-color="#35c3ed"/><stop offset="1" stop-color="#66d84a"/></linearGradient></defs><circle cx="12" cy="12" r="12" fill="#1579ce"/><path d="M.2 11C1 4 6 0 12 0c7 0 12 5 12 10 0 4-3 6-6 6-2 0-4-1-3-3C16 8 10 6 6 7 3 8 1 9 .2 11z" fill="url(#edge)"/><path d="M9 11c-3 5 0 10 6 12C9 25 2 21 .5 14 1 9 6 7 9 8c3 1 2 2 0 3z" fill="#1266b5"/><path d="M9 12c-1 4 3 8 8 8 3 0 5-2 5.500-2C20 23 15 24 14 23.800 9 22 7 16 9 12z" fill="#0d4a94"/></svg></button>
    <button class="task open" aria-label="File Explorer"><svg width="22" height="19"><path d="M0 0h8l2 2h11v16H0z" fill="#e9a927"/><path d="M0 4h22v14H0z" fill="#ffd86b"/><path d="M4 10h14v9h-4v-4H8v4H4z" fill="#2f8ad8"/></svg></button>
    <button class="task" aria-label="Microsoft Store"><svg width="23" height="24"><path d="M0 6h23v16a2 2 0 01-2 2H2a2 2 0 01-2-2z" fill="#fff"/><path d="M7 6V4a4 4 0 018 0v2" fill="none" stroke="#ddd" stroke-width="1.500"/><path d="M6 10h5v5H6z" fill="#f25022"/><path d="M12 10h5v5h-5z" fill="#7fba00"/><path d="M6 16h5v5H6z" fill="#00a4ef"/><path d="M12 16h5v5h-5z" fill="#ffb900"/></svg></button>
    <button class="task" aria-label="Mail"><svg width="24" height="19"><path d="M0 7l12-7 12 7v12H0z" fill="#fff"/><path d="M1 7h22l-9 8v-4z" fill="#20353d"/></svg></button>
    <button class="task open" aria-label="Chrome"><svg width="24" height="24" viewBox="0 0 24 24"><circle cx="12" cy="12" r="12" fill="#fc3"/><path d="M12 0a12 12 0 0110.400 6H12L6.800 15 1.600 6A12 12 0 0112 0z" fill="#e33b2e"/><path d="M1.600 6l5.200 9L12 18l-.5 6A12 12 0 011.600 6z" fill="#2ba24c"/><path d="M12 24l5.200-9h-5z" fill="#fc3"/><circle cx="12" cy="12" r="6" fill="#fff"/><circle cx="12" cy="12" r="4.600" fill="#3b7de9"/></svg></button>
    <button class="task open current" aria-label="Tableau"><svg width="22" height="23"><rect width="22" height="23" rx="1" fill="#fff"/><use href="#plusmark" x="2" y="3" width="18" height="18" color="#4a86a8"/></svg></button>
    <button class="weather"><svg width="26" height="26"><path d="M9 2c5 3 6 9 2 13-4 1-8-1-9-4 5 1 8-3 7-9z" fill="#f6a52b"/><path d="M6 24a5 5 0 010-10 7 7 0 0113-1 5.500 5.500 0 011 11z" fill="#bcd4f5"/><path d="M6 24a5 5 0 01-4-7c6 4 15 4 22 0 1 4-1 7-4 7z" fill="#8fb6ec"/><circle cx="19" cy="7" r="6" fill="#c42b1c"/><text x="16" y="11" font-size="10" fill="#fff">1</text></svg><span>28°C</span><span>Mostly cloudy</span></button>
    <div class="tray">
      <svg width="13" height="8"><path d="M1 7l5.500-5.500L12 7" fill="none" stroke="#fff" stroke-width="1.400"/></svg>
      <svg width="14" height="17" fill="none" stroke="#fff" stroke-width="1.300"><path d="M2 3c2-3 6-3 8 0M2 14c2 3 6 3 8 0M1.600 5.500h7v6h-7zM8.600 8l3-2v5l-3-2"/></svg>
      <svg width="16" height="16" fill="none" stroke="#fff" stroke-width="1.300"><path d="M13 6V3.500H1v8h6M3.500 6v3"/><circle cx="11.500" cy="11" r="4.500" fill="#10893e" stroke="none"/><path d="M11.500 14V9M9.500 9.500c0 2 4 2 4 0" stroke-width="1"/></svg>
      <svg width="17" height="16" fill="none" stroke="#fff" stroke-width="1.200"><path d="M16 8c0-1-1-1.500-2-1.500h-3.500L7 1H5.500l1.500 5.500H3.500L2 5H1l1 3-1 3h1l1.500-1.500H7L5.500 15H7l3.500-5.500H14c1 0 2-.5 2-1.500z"/></svg>
      <svg width="18" height="14" fill="none" stroke="#fff" stroke-width="1.200"><path d="M1 5h2.500L7 1.500v11L3.500 9H1zM9.500 5c1 1.500 1 3 0 4M12 3c2 2.500 2 5.500 0 8M14.500 1c3 3.500 3 8.500 0 12"/></svg>
      <span>ENG</span>
    </div>
    <div class="clock"><span>10:30</span><span>06-10-2023</span></div>
    <button class="notif" aria-label="Notifications"><svg width="26" height="26"><path d="M1 2h16v13H8l-3 4v-4H1z" fill="#fff"/><path d="M4 5.500h10M4 8.500h10M4 11.500h7" stroke="#1c2943"/><circle cx="16" cy="17" r="8" fill="#333b49" stroke="#8d96a3"/><text x="13" y="22" font-size="12" fill="#fff">2</text></svg></button>
  </footer>
</div>
<script src="app.js"></script>
</body>
</html>
```
FILE: app.js
```js
const palette = {
  blue: '#4e79a7', sky: '#a0cbe8', orange: '#f28e2b', peach: '#ffbe7d', green: '#59a14f',
  lime: '#8cd17d', olive: '#b6992d', yellow: '#f1ce63', teal: '#499894', aqua: '#86bcb6',
  red: '#e15759', coral: '#ff9d9a', gray: '#79706e', silver: '#bab0ac', pink: '#d37295',
  rose: '#fabfd2', purple: '#b07aa1', lilac: '#d4a6c8', brown: '#9d7660', tan: '#d7b5a6'
};

const airports = {
  rose: [[636,313],[641,358],[626,436],[672,407],[688,385],[732,342],[619,477],[619,479]],
  silver: [[611,294],[600,311],[581,333],[645,341],[553,384],[722,338],[612,523]],
  tan: [[624,300],[601,337],[601,354],[713,372],[757,349],[774,328]],
  sky: [[618,255],[592,272],[600,286],[591,299],[587,411],[704,368]],
  green: [[591,256],[602,292],[622,333],[616,374],[626,433],[666,420],[640,489]],
  yellow: [[599,277],[574,343],[591,339],[583,423],[617,430],[582,455]],
  coral: [[606,277],[591,283],[624,342],[658,396],[637,472],[609,486],[602,497]],
  orange: [[606,299],[545,383],[566,390],[602,432],[777,332],[774,347],[750,368]],
  purple: [[617,302],[636,319],[669,351],[615,417],[775,359],[630,463],[607,506]],
  peach: [[604,315],[554,401],[651,338],[701,379],[690,350],[766,357],[566,500]],
  blue: [[595,269],[614,281],[613,290],[611,298],[593,307],[614,318],[553,336],[577,438],[789,323]],
  teal: [[576,323],[613,401],[675,338],[692,344],[713,348],[764,338],[778,338],[592,479]],
  lime: [[627,351],[570,376],[542,391],[571,397],[697,406],[711,371],[643,479]],
  aqua: [[616,360],[658,351],[662,388],[786,330],[797,324],[757,363],[620,467]],
  pink: [[583,360],[650,335],[548,395],[632,397],[693,374],[594,455],[613,498]],
  red: [[546,376],[573,418],[654,343],[700,371],[753,344],[784,322],[628,500]],
  lilac: [[576,384],[572,404],[601,380],[583,407],[586,442],[649,443],[623,490]],
  olive: [[542,374],[680,389],[689,359],[763,368],[623,510],[764,492]],
  brown: [[566,364],[642,375],[650,361],[666,399],[672,431],[723,381],[590,450]],
  gray: [[597,410],[680,392],[659,437],[609,457],[598,489],[635,443],[765,516]]
};

const layer = document.getElementById('airports');
function addDot(name, x, y) {
  const dot = document.createElementNS('http://www.w3.org/2000/svg', 'circle');
  dot.setAttribute('cx', x);
  dot.setAttribute('cy', y);
  dot.setAttribute('r', 3.7);
  dot.setAttribute('fill', palette[name]);
  layer.append(dot);
}
for (const [name, points] of Object.entries(airports)) {
  for (const [x, y] of points) addDot(name, x, y);
}
// Drawn last so that they stay above their close neighbours.
addDot('tan', 611, 457);
addDot('yellow', 633, 501);

const cities = [
  ['Null', 'blue'], ['Adampur', 'sky'], ['Agartala', 'orange'], ['Agatti Island', 'peach'],
  ['Agra', 'green'], ['Ahmedabad', 'lime'], ['Aizwal', 'olive'], ['Ajmer', 'yellow'],
  ['Akola', 'teal'], ['Allahabad', 'aqua'], ['Along', 'red'], ['Amritsar', 'coral'],
  ['Aurangabad', 'gray'], ['Baghdogra', 'silver'], ['Bakshi Ka Talab', 'pink'],
  ['Bangalore', 'rose'], ['Bareilly', 'purple'], ['Baroda', 'lilac'], ['Belgaum', 'brown']
];
const list = document.getElementById('cities');
for (const [name, color] of cities) {
  const item = document.createElement('li');
  const chip = document.createElement('i');
  chip.style.background = palette[color];
  item.append(chip, name);
  list.append(item);
}
```
FILE: styles.css
```css
* { box-sizing: border-box; }
body { margin: 0; background: #f5f5f5; color: #333; font: 12px/16px "Noto Sans", "Open Sans", sans-serif; }
button, input, select { font: inherit; color: inherit; background: none; border: 0; margin: 0; padding: 0; }
button { display: flex; align-items: center; justify-content: center; white-space: nowrap; }
ul { list-style: none; margin: 0; padding: 0; }
h1, h2, h3 { margin: 0; font-weight: 400; }
svg { display: block; flex: none; }
.defs { position: absolute; width: 0; height: 0; }
.app { display: flex; flex-direction: column; height: 100vh; }

.titlebar { display: flex; align-items: center; height: 24px; background: #fff; color: #000; padding: 0 2px 0 3px; flex: none; font-family: Roboto, sans-serif; }
.applogo { color: #2b7ab0; margin-right: 4px; }
.apptitle { flex: 1; }
.win { width: 46px; height: 22px; }
.menubar { display: flex; gap: 16px; padding: 0 8px; height: 19px; background: #fff; color: #000; flex: none; font-family: Roboto, sans-serif; }

.toolbar { display: flex; align-items: center; height: 41px; flex: none; color: #555; background: #f5f5f5; }
.group { display: flex; align-items: center; gap: 6px; height: 34px; padding: 0 8px 0 10px; border-right: 1px solid #ccc; }
.group.first { padding: 0 12px 0 11px; }
.group.roomy { gap: 7px; padding: 0 8px 0 9px; }
.group.wide { gap: 8px; padding-right: 11px; }
.group.cards-group { padding: 0 8px 0 14px; }
.group.last { border: 0; flex: 1; }
.tb { width: 24px; height: 30px; }
.off { color: #b9b9b9; }
.car { width: 12px; height: 30px; margin: 0 -2px 0 -6px; }
.tb.pin { width: 30px; background: #e4e4e4; }
.guide { margin-right: 16px; }
.showme { gap: 7px; font-size: 13px; line-height: 20px; color: #222; margin-right: 28px; }

.combo { display: flex; align-items: center; position: relative; background: #fff; border: 1px solid #c4c4c4; border-radius: 2px; color: #555; }
.combo select { appearance: none; flex: 1; min-width: 0; height: 100%; outline: 0; opacity: 1; }
.combo > svg:last-child { margin: 0 5px; }
.type-combo select, .country select { border-right: 1px solid #d8d8d8; }
.fit { width: 104px; height: 23px; background: #f5f5f5; border-color: #d0d0d0; color: #c4c4c4; margin: 0 8px 0 2px; }

.work { display: flex; flex: 1; min-height: 0; }
.datapane { width: 210px; flex: none; background: #fff; border-right: 1px solid #ccc; border-top: 1px solid #d4d4d4; overflow: hidden; }
.ptabs { display: grid; grid-template-columns: 77px 1fr; height: 26px; font-size: 13px; }
.ptabs button { border: solid #ccc; border-width: 0 0 1px 1px; background: #fafafa; justify-content: space-between; padding: 0 7px 0 12px; }
.ptabs .on { border: 0; background: #fff; color: #000; font-weight: 600; padding-left: 18px; }
.source { display: flex; align-items: center; gap: 5px; height: 30px; padding-left: 20px; border-bottom: 1px solid #ddd; color: #555; }
.finder { display: flex; align-items: center; gap: 5px; height: 39px; padding: 1px 12px 0 8px; }
.search { display: flex; align-items: center; width: 130px; height: 23px; border: 1px solid #bbb; border-radius: 2px; padding: 0 6px; }
.search input { flex: 1; min-width: 0; outline: 0; }
.search input::placeholder { color: #999; }
.vline { width: 1px; height: 18px; background: #d0d0d0; }
.viewby { gap: 9px; color: #555; }
.datapane h2 { padding: 0 18px; height: 18px; font-size: 13px; line-height: 16px; font-weight: 600; color: #000; }
.tables li { display: flex; align-items: center; height: 27px; padding-left: 9px; font-weight: 600; color: #000; }
.tables svg:first-child { margin-right: 9px; }
.tables svg:nth-child(2) { margin-right: 12px; color: #555; }
.names { display: flex; align-items: center; height: 26px; margin: 0 7px 0 15px; padding-top: 2px; border-bottom: 1px solid #d4d4d4; }
.type { width: 32px; padding-left: 6px; color: #3f7f9f; font-size: 10px; }
.names .type { font-weight: 600; }
.fields li { display: flex; align-items: center; height: 21px; padding-left: 19px; }
.fields svg { margin-right: 12px; color: #3ca073; }
.fields .type { width: 28px; padding: 0; }

.cards { width: 166px; flex: none; padding: 0 6px; display: flex; flex-direction: column; gap: 6px; }
.card { background: #fafafa; border: 1px solid #d0d0d0; }
.card h3 { padding: 7px 6px; font-size: 12px; line-height: 16px; color: #555; white-space: nowrap; }
.card.marks h3 { padding-bottom: 6px; }
.pages { height: 62px; }
.filters { height: 78px; }
.pill { height: 20px; border-radius: 10px; padding: 0 11px; color: #fff; justify-content: flex-start; }
.pill.blue { background: #4996b2; margin: 2px 4px; width: 144px; padding: 0 10px; }
.layer { width: 100%; height: 32px; border-top: 1px solid #d8d8d8; justify-content: flex-start; gap: 9px; padding: 0 0 2px 9px; font-size: 13px; }
.layer svg, .lead { color: #666; }
.layer.all { font-weight: 600; color: #000; }
.markbox { border-top: 1px solid #d8d8d8; padding: 5px 6px 0; }
.type-combo { height: 21px; padding-left: 10px; gap: 5px; }
.props { display: grid; grid-template-columns: repeat(3, 43px); justify-content: space-between; gap: 6px; margin-top: 6px; }
.props button { flex-direction: column; gap: 4px; height: 42px; padding-top: 3px; border: 1px solid #ccc; font-size: 11px; line-height: 16px; }
.encs { position: relative; margin-top: 7px; height: 46px; overflow: hidden; }
.enc { display: flex; align-items: center; gap: 4px; height: 23px; padding-left: 7px; }
.enc .pill { background: #d3d3d3; color: #333; width: 111px; padding: 0 10px; }
.spin { position: absolute; right: 1px; bottom: 1px; }
.spin button { width: 12px; height: 12px; border: 1px solid #aaa; background: #e4e4e4; color: #445; }

.sheetarea { flex: 1; min-width: 0; display: flex; flex-direction: column; gap: 6px; padding: 0 6px 6px 0; }
.shelf { display: flex; align-items: center; height: 28px; flex: none; }
.shelfname { display: flex; align-items: center; gap: 7px; width: 125px; height: 100%; border-right: 1px solid #d0d0d0; padding-left: 6px; margin-right: 2px; color: #555; }
.pill.green { background: #00b180; width: 148px; }
.pill.left { border-radius: 10px 0 0 10px; margin-right: 2px; }
.pill.right { border-radius: 0 10px 10px 0; }
.viewrow { display: flex; gap: 6px; flex: 1; min-height: 0; }
.canvas { flex: 1; min-width: 0; display: flex; flex-direction: column; padding: 0 8px 8px 9px; background: #faf3e6; }
.canvas h1 { height: 57px; padding-top: 8px; font: 900 31px/44px Lato, sans-serif; color: #4e79a7; text-align: center; text-decoration: underline; white-space: nowrap; text-decoration-thickness: 2px; text-underline-offset: 2px; text-decoration-skip-ink: none; -webkit-text-stroke: 1px #4e79a7; }
.mapframe { position: relative; flex: 1; min-height: 0; border: 5px solid #ee5744; overflow: hidden; }
.map { width: 100%; height: 100%; }
.land { fill: #e6e6e6; }
.shade { fill: #ededed; }
.lakes { fill: #fff; }
.state, .border, .inner { fill: none; stroke-linejoin: round; }
.state { stroke: #bdbdbd; stroke-width: 1; }
.border { stroke: #a0a0a0; stroke-width: 1; }
.thin { stroke: #b3b3b3; }
.india { fill: #dfc6d9; stroke: #1a1a1a; stroke-width: 1.200; stroke-linejoin: round; }
.inner { stroke: #cfb7ca; stroke-width: 1; }
.isles { fill: none; stroke: #111; stroke-width: 2; }
.labels { font: 13px "Noto Sans", sans-serif; fill: #8c8c8c; stroke: #f2f2f2; stroke-width: 2; paint-order: stroke; }
.labels .faint { fill: #b8a5b3; stroke: none; }
.airports { stroke: #6d6d6d; stroke-width: 1; }
.credit { position: absolute; left: 0; bottom: 0; height: 14px; padding: 0 3px 0 1px; background: #fff; color: #555; font: 11px/14px "Liberation Sans", sans-serif; }
.unknown { position: absolute; right: 1px; bottom: 1px; height: 19px; padding: 0 9px; border-radius: 3px; background: #a8a8a8; color: #fff; font-weight: 700; }

.legends { width: 154px; flex: none; display: flex; flex-direction: column; gap: 6px; }
.countryfilter { height: 58px; background: #fff; }
.country { height: 20px; margin: 2px 3px; padding-left: 3px; color: #20b436; font: 900 11px/16px Lato, sans-serif; -webkit-text-stroke: 1px #20b436; }
.countrylegend { height: 52px; background: #faf3e6; }
.legends h3 { background: #fafafa; height: 29px; padding: 7px 6px 6px; }
.keys { background: #faf3e6; color: #20b436; font: 900 14px/20px Lato, sans-serif; -webkit-text-stroke: 1px #20b436; }
.keys li { display: flex; align-items: center; gap: 5px; height: 20px; padding-left: 4px; white-space: nowrap; }
.keys i { width: 13px; height: 13px; border: 1px solid #666; flex: none; }
.keys .nation i { border-color: #000; }
.citylegend { flex: 1; min-height: 0; display: flex; flex-direction: column; }
.citybox { flex: 1; min-height: 0; display: flex; overflow: hidden; background: #faf3e6; }
.citybox .keys { flex: 1; }
.scroll { width: 16px; margin-right: 3px; background: #f0f0f0; display: flex; flex-direction: column; align-items: center; padding: 6px 0; }
.scroll i { width: 15px; height: 43px; margin-top: 5px; margin-bottom: auto; background: #cdcdcd; }

.sheets { display: flex; height: 31px; flex: none; background: #e6e6e6; border-top: 1px solid #c8c8c8; border-bottom: 1px solid #c8c8c8; color: #666; }
.sheets button { min-width: 57px; border-right: 1px solid #c8c8c8; gap: 4px; justify-content: flex-start; padding-left: 5px; }
.sheets .ds { width: 131px; gap: 5px; padding-left: 9px; }
.sheets .on { background: #fafafa; color: #444; font-weight: 600; }
.sheets .db { width: 103px; padding-left: 7px; }
.sheets .story { width: 71px; padding-left: 7px; }
.sheets .add { min-width: 32px; padding-left: 9px; }

.status { display: flex; align-items: center; height: 20px; flex: none; padding-left: 3px; background: #ebebeb; font-size: 11px; }
.status span { margin-right: 15px; }
.cell { width: 27px; height: 100%; border-left: 1px solid #ccc; }
.cell.long { width: 127px; margin-left: auto; }
.cell.big { width: 47px; }
.pager, .views { display: flex; align-items: center; gap: 8px; height: 100%; padding: 0 7px; border-left: 1px solid #ccc; }
.views { gap: 10px; }

.taskbar { display: flex; height: 40px; flex: none; background: linear-gradient(90deg, #20353d, #22383f 55%, #1c2943 80%, #1b2640); color: #fff; }
.task { width: 49px; flex: none; border-bottom: 2px solid transparent; border-top: 2px solid transparent; }
.task.open { border-bottom-color: #76b9ed; }
.task.current { background: #4b5d67; }
.tasksearch { display: flex; align-items: center; gap: 10px; width: 287px; flex: none; background: #f2f2f2; border: 1px solid #bbb; padding-left: 11px; color: #222; }
.tasksearch input { flex: 1; min-width: 0; font-size: 14px; line-height: 20px; outline: 0; }
.tasksearch input::placeholder { color: #333; }
.medal { margin-right: 8px; }
.weather { margin-left: auto; gap: 8px; font-size: 13px; line-height: 20px; }
.tray { display: flex; align-items: center; gap: 8px; padding: 0 10px 0 26px; }
.clock { display: flex; flex-direction: column; justify-content: center; align-items: center; width: 64px; line-height: 18px; font-size: 11px; }
.notif { width: 55px; }
```
